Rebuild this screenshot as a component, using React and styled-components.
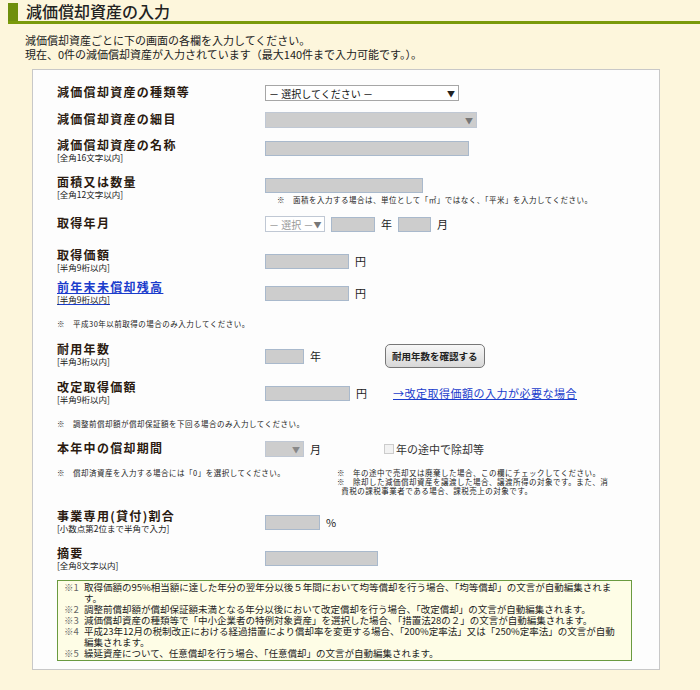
import React from "react";
import styled, { createGlobalStyle } from "styled-components";

const G = createGlobalStyle`
  body { margin:0; background:#fdf6dc; font-family:"Noto Sans CJK JP","Noto Sans",sans-serif; color:#222; }
`;
const Page = styled.div`width:700px;height:690px;overflow:hidden;`;
const TitleBar = styled.div`display:flex;align-items:stretch;border-bottom:3px solid #7a9a0a;margin:3px 0 0 8px;height:18px;`;
const TitleMark = styled.div`width:10px;background:#6f8f0c;margin-right:8px;`;
const Title = styled.h1`margin:0;font-size:16px;font-weight:500;line-height:16px;color:#222;`;
const Intro = styled.div`margin:9px 0 0 25px;font-size:11px;line-height:14px;`;
const Panel = styled.div`margin:8px 40px 0 32px;background:#fdfdfd;border:1px solid #c8c8c8;padding:15px 27px 8px 24px;`;
const Row = styled.div`display:grid;grid-template-columns:208px 1fr;align-items:start;margin-top:${p=>p.mt||0}px;`;
const Label = styled.div`font-size:12px;font-weight:700;letter-spacing:1.3px;line-height:14px;color:#2a1a10;`;
const LinkLabel = styled(Label)`color:#1a3ccc;text-decoration:underline;`;
const Sub = styled.div`font-size:8.5px;line-height:11px;font-weight:400;letter-spacing:0;color:#222;text-decoration:none;`;
const Ctrl = styled.div`display:flex;align-items:center;gap:6px;font-size:11px;white-space:nowrap;margin-top:${p=>p.mt||0}px;`;
const Input = styled.div`width:${p=>p.w}px;height:15px;flex:none;background:#cdcdcd;border:1px solid #a9b9cc;box-sizing:border-box;`;
const Select = styled.div`width:${p=>p.w}px;height:16px;flex:none;white-space:nowrap;box-sizing:border-box;border:1px solid ${p=>p.dis?"#c0c8d4":"#a6a6a6"};background:${p=>p.grey?"#cdcdcd":"#fff"};display:flex;align-items:center;justify-content:space-between;padding:0 3px;font-size:10px;color:${p=>p.dis?"#999":"#111"};`;
const Arrow = styled.span`font-size:8px;color:${p=>p.c||"#222"};`;
const Note = styled.div`font-size:7.5px;line-height:9px;letter-spacing:.5px;margin-top:${p=>p.mt||0}px;margin-left:${p=>p.ml||0}px;`;
const Btn = styled.div`margin-left:58px;height:22px;padding:0 6px;border:1px solid #777;border-radius:5px;background:linear-gradient(#f8f8f8,#d8d8d8);font-size:9.5px;font-weight:700;display:flex;align-items:center;`;
const A = styled.a`color:#1a3ccc;text-decoration:underline;font-size:11px;margin-left:20px;letter-spacing:.5px;`;
const Check = styled.span`display:inline-flex;align-items:center;gap:2px;margin-left:57px;color:#333;font-size:11px;`;
const Box = styled.span`width:8px;height:8px;border:1px solid #ccc;background:#f2f2f2;`;
const NotesGrid = styled.div`display:grid;grid-template-columns:280px 1fr;`;
const Footer = styled.div`margin-top:9px;border:1px solid #6a9a40;background:#fefde6;padding:1px 8px 1px 6px;font-size:9.5px;line-height:11px;`;
const FItem = styled.div`display:grid;grid-template-columns:20px 1fr;`;
const Mark = styled.span`color:#666;`;

export default function App(){
  return <Page><G/>
    <TitleBar><TitleMark/><Title>減価償却資産の入力</Title></TitleBar>
    <Intro>減価償却資産ごとに下の画面の各欄を入力してください。<br/>現在、0件の減価償却資産が入力されています（最大140件まで入力可能です。）。</Intro>
    <Panel>
      <Row><Label>減価償却資産の種類等</Label><Ctrl><Select w={194}>－ 選択してください － <Arrow>▼</Arrow></Select></Ctrl></Row>
      <Row mt={11}><Label>減価償却資産の細目</Label><Ctrl><Select w={212} grey dis><span/><Arrow c="#777">▼</Arrow></Select></Ctrl></Row>
      <Row mt={10}><Label>減価償却資産の名称<Sub>[全角16文字以内]</Sub></Label><Ctrl mt={3}><Input w={204}/></Ctrl></Row>
      <Row mt={12}><Label>面積又は数量<Sub>[全角12文字以内]</Sub></Label><div><Ctrl mt={3}><Input w={158}/></Ctrl><Note mt={2} ml={12}>※　面積を入力する場合は、単位として「㎡」ではなく、「平米」を入力してください。</Note></div></Row>
      <Row mt={12}><Label>取得年月</Label><Ctrl><Select w={60} dis>－ 選択 － <Arrow c="#777">▼</Arrow></Select><Input w={44}/>年<Input w={33}/>月</Ctrl></Row>
      <Row mt={16}><Label>取得価額<Sub>[半角9桁以内]</Sub></Label><Ctrl mt={5}><Input w={84}/>円</Ctrl></Row>
      <Row mt={7}><LinkLabel>前年末未償却残高<Sub>[半角9桁以内]</Sub></LinkLabel><Ctrl mt={5}><Input w={84}/>円</Ctrl></Row>
      <Note mt={14}>※　平成30年以前取得の場合のみ入力してください。</Note>
      <Row mt={14}><Label>耐用年数<Sub>[半角3桁以内]</Sub></Label><Ctrl mt={2}><Input w={39}/>年<Btn>耐用年数を確認する</Btn></Ctrl></Row>
      <Row mt={12}><Label>改定取得価額<Sub>[半角9桁以内]</Sub></Label><Ctrl mt={5}><Input w={85}/>円<A>→改定取得価額の入力が必要な場合</A></Ctrl></Row>
      <Note mt={14}>※　調整前償却額が償却保証額を下回る場合のみ入力してください。</Note>
      <Row mt={13}><Label>本年中の償却期間</Label><Ctrl><Select w={39} grey dis><span/><Arrow c="#888">▼</Arrow></Select>月<Check><Box/>年の途中で除却等</Check></Ctrl></Row>
      <NotesGrid>
        <Note mt={11}>※　償却済資産を入力する場合には「0」を選択してください。</Note>
        <Note mt={11}>※　年の途中で売却又は廃棄した場合、この欄にチェックしてください。<br/>※　除却した減価償却資産を譲渡した場合、譲渡所得の対象です。また、消<br/>&nbsp;&nbsp;費税の課税事業者である場合、課税売上の対象です。</Note>
      </NotesGrid>
      <Row mt={14}><Label>事業専用(貸付)割合<Sub>[小数点第2位まで半角で入力]</Sub></Label><Ctrl mt={5}><Input w={55}/>%</Ctrl></Row>
      <Row mt={12}><Label>摘要<Sub>[全角8文字以内]</Sub></Label><Ctrl mt={5}><Input w={113}/></Ctrl></Row>
      <Footer>
        <FItem><Mark>※1</Mark><span>取得価額の95%相当額に達した年分の翌年分以後５年間において均等償却を行う場合、「均等償却」の文言が自動編集されます。</span></FItem>
        <FItem><Mark>※2</Mark><span>調整前償却額が償却保証額未満となる年分以後において改定償却を行う場合、「改定償却」の文言が自動編集されます。</span></FItem>
        <FItem><Mark>※3</Mark><span>減価償却資産の種類等で「中小企業者の特例対象資産」を選択した場合、「措置法28の２」の文言が自動編集されます。</span></FItem>
        <FItem><Mark>※4</Mark><span>平成23年12月の税制改正における経過措置により償却率を変更する場合、「200%定率法」又は「250%定率法」の文言が自動編集されます。</span></FItem>
        <FItem><Mark>※5</Mark><span>繰延資産について、任意償却を行う場合、「任意償却」の文言が自動編集されます。</span></FItem>
      </Footer>
    </Panel>
  </Page>;
}
